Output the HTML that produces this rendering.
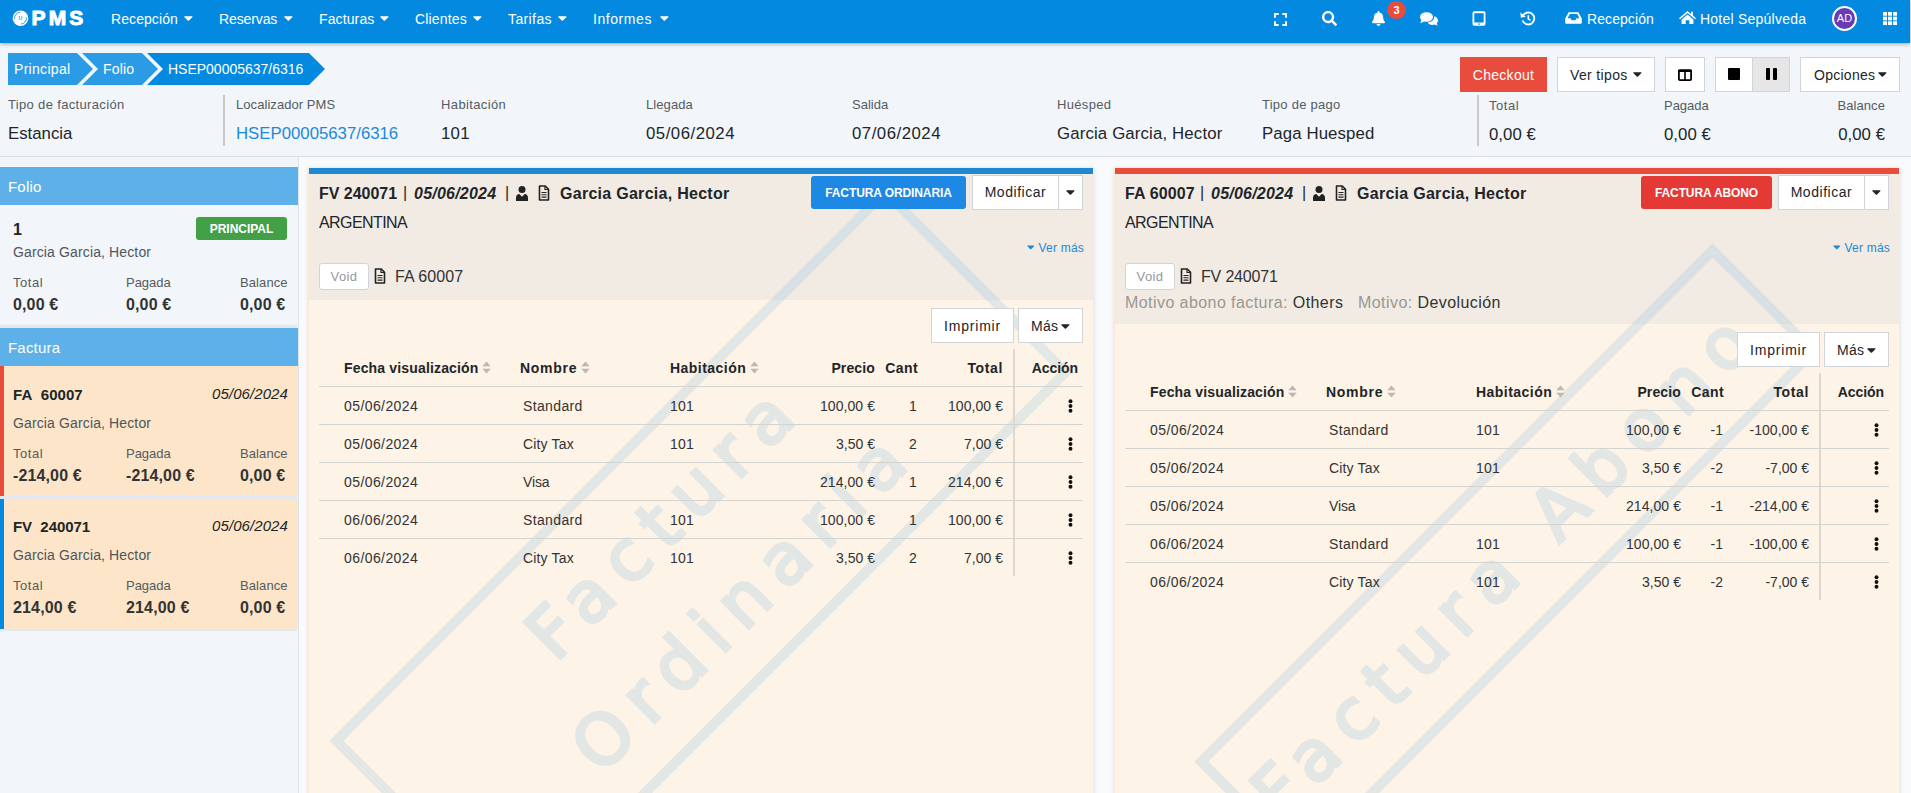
<!DOCTYPE html>
<html lang="es">
<head>
<meta charset="utf-8">
<title>PMS - Folio</title>
<style>
*{box-sizing:border-box}
html,body{margin:0;padding:0}
body{width:1911px;height:793px;overflow:hidden;position:relative;background:#f2f6fa;font-family:"Liberation Sans",sans-serif;color:#212529;font-size:14px}
.t{position:absolute;line-height:20px;white-space:nowrap}
.abs{position:absolute}
svg{display:block}
.caret{position:absolute;width:8.75px;height:14px;fill:currentColor}
#nav{position:absolute;left:0;top:0;width:1910px;height:43px;background:#0489e1;box-shadow:0 1px 4px rgba(0,0,0,.35);color:#fff;z-index:5}
#nav .t{color:#fff}
.btn{position:absolute;background:#fff;border:1px solid #d0d5da;color:#212529;text-align:center;white-space:nowrap}
.crumb{position:absolute;top:53px;height:32px;color:#fff;font-size:14px;line-height:32px;white-space:nowrap}
#side{position:absolute;left:0;top:157px;width:299px;height:636px;border-right:1px solid #dde3e9;background:#f2f6fa}
.shead{position:absolute;left:0;width:298px;height:38px;background:#5eb1e8;color:#fff;font-size:15px;line-height:39px;padding-left:8px}
.card{position:absolute;left:0;width:298px;height:130px;background:#fce5c8}
.panel{position:absolute;top:168px;width:784px;height:640px;background:#fdf3e6;overflow:hidden;box-shadow:0 0 0 1px #fbe9d8,0 1px 4px 1px rgba(0,0,0,.13)}
.phead{position:absolute;left:0;top:0;width:784px;background:#f1ebe4}
.wm{position:absolute;border:10px solid #0489e0;color:#0489e0;opacity:.1;font-family:"DejaVu Sans",sans-serif;font-weight:400;-webkit-text-stroke:3.4px #0489e0;font-size:70px;line-height:112px;letter-spacing:14px;text-align:center;padding:14.5px 10.5px 6.5px 10.5px;transform:rotate(-45deg);white-space:nowrap}
.hl{position:absolute;height:1px;background:#d3d3d0}
.badge{position:absolute;color:#fff;font-weight:700;font-size:12px;text-align:center;border-radius:3px}
</style>
</head>
<body>

<div id="nav">
<svg class="abs" style="left:12px;top:10px" width="17" height="17" viewBox="0 0 17 17"><circle cx="8.500" cy="8.200" r="7.800" fill="#fff"/><path d="M2.600 8.900A6 6 0 0 1 8 2.300" fill="none" stroke="#0489e1" stroke-width=".8"/><path d="M14.400 7.500A6 6 0 0 1 9 14.100" fill="none" stroke="#0489e1" stroke-width=".8"/><text x="8.400" y="10.100" font-size="5.200" font-weight="700" fill="#2b9be6" text-anchor="middle" font-family="Liberation Sans">U</text></svg>
<span class="t" style="top:8.5px;font-size:21px;font-weight:700;color:#fff;letter-spacing:3.1px;left:31.6px;line-height:24px;top:6.050px;-webkit-text-stroke:1px #fff;">PMS</span>
<span class="t" style="top:9.0px;font-size:14px;color:#fff;letter-spacing:0.08px;left:111px;">Recepción</span>
<svg class="caret" style="left:184.4px;top:11.2px;width:8.75px;height:14px" viewBox="0 0 320 512"><path d="M31.3 192h257.3c17.8 0 26.7 21.5 14.1 34.1L174.1 354.8c-7.8 7.8-20.5 7.8-28.3 0L17.2 226.1C4.6 213.5 13.500 192 31.300 192z"/></svg>
<span class="t" style="top:9.0px;font-size:14px;color:#fff;letter-spacing:-0.11px;left:219px;">Reservas</span>
<svg class="caret" style="left:284.4px;top:11.2px;width:8.75px;height:14px" viewBox="0 0 320 512"><path d="M31.3 192h257.3c17.8 0 26.7 21.5 14.1 34.1L174.1 354.8c-7.8 7.8-20.5 7.8-28.3 0L17.2 226.1C4.6 213.5 13.500 192 31.300 192z"/></svg>
<span class="t" style="top:9.0px;font-size:14px;color:#fff;letter-spacing:0.12px;left:319px;">Facturas</span>
<svg class="caret" style="left:380.4px;top:11.2px;width:8.75px;height:14px" viewBox="0 0 320 512"><path d="M31.3 192h257.3c17.8 0 26.7 21.5 14.1 34.1L174.1 354.8c-7.8 7.8-20.5 7.8-28.3 0L17.2 226.1C4.6 213.5 13.500 192 31.300 192z"/></svg>
<span class="t" style="top:9.0px;font-size:14px;color:#fff;letter-spacing:0.16px;left:415px;">Clientes</span>
<svg class="caret" style="left:473.4px;top:11.2px;width:8.75px;height:14px" viewBox="0 0 320 512"><path d="M31.3 192h257.3c17.8 0 26.7 21.5 14.1 34.1L174.1 354.8c-7.8 7.8-20.5 7.8-28.3 0L17.2 226.1C4.6 213.5 13.500 192 31.300 192z"/></svg>
<span class="t" style="top:9.0px;font-size:14px;color:#fff;letter-spacing:0.39px;left:508px;">Tarifas</span>
<svg class="caret" style="left:558.4px;top:11.2px;width:8.75px;height:14px" viewBox="0 0 320 512"><path d="M31.3 192h257.3c17.8 0 26.7 21.5 14.1 34.1L174.1 354.8c-7.8 7.8-20.5 7.8-28.3 0L17.2 226.1C4.6 213.5 13.500 192 31.300 192z"/></svg>
<span class="t" style="top:9.0px;font-size:14px;color:#fff;letter-spacing:0.56px;left:593px;">Informes</span>
<svg class="caret" style="left:660.4px;top:11.2px;width:8.75px;height:14px" viewBox="0 0 320 512"><path d="M31.3 192h257.3c17.8 0 26.7 21.5 14.1 34.1L174.1 354.8c-7.8 7.8-20.5 7.8-28.3 0L17.2 226.1C4.6 213.5 13.500 192 31.300 192z"/></svg>
<svg class="abs" style="left:1273.5px;top:12.5px" width="13" height="13" viewBox="0 0 14 14" fill="none" stroke="#fff" stroke-width="2.100"><path d="M1 5V1h4M9 1h4v4M13 9v4H9M5 13H1V9"/></svg>
<svg class="abs" style="left:1322px;top:11px" width="15" height="15" viewBox="0 0 512 512" fill="#fff"><path d="M505 442.7L405.3 343c-4.500-4.500-10.600-7-17-7H372c27.600-35.300 44-79.700 44-128C416 93.100 322.900 0 208 0S0 93.100 0 208s93.100 208 208 208c48.300 0 92.700-16.400 128-44v16.300c0 6.400 2.500 12.500 7 17l99.700 99.700c9.400 9.400 24.600 9.400 33.900 0l28.300-28.300c9.400-9.400 9.400-24.600.1-34zM208 336c-70.700 0-128-57.200-128-128 0-70.700 57.200-128 128-128 70.700 0 128 57.200 128 128 0 70.700-57.200 128-128 128z"/></svg>
<svg class="abs" style="left:1372px;top:11px" width="13" height="15" viewBox="0 0 448 512" fill="#fff"><path d="M224 512c35.320 0 63.970-28.650 63.970-64H160.030c0 35.350 28.650 64 63.970 64zm215.390-149.710c-19.320-20.760-55.470-51.990-55.470-154.290 0-77.700-54.480-139.900-127.940-155.160V32c0-17.670-14.320-32-31.980-32s-31.980 14.330-31.980 32v20.840C118.560 68.100 64.080 130.300 64.080 208c0 102.300-36.150 133.530-55.470 154.290-6 6.450-8.660 14.160-8.610 21.710.11 16.400 12.980 32 32.100 32h383.800c19.120 0 32-15.600 32.100-32 .05-7.550-2.610-15.270-8.610-21.710z"/></svg>
<div class="abs" style="left:1387px;top:1px;width:19px;height:18px;border-radius:9px;background:#e74c3c;color:#fff;font-size:11px;font-weight:700;text-align:center;line-height:18px">3</div>
<svg class="abs" style="left:1420px;top:12px" width="18" height="14" viewBox="0 0 18 14" fill="#fff"><ellipse cx="6.500" cy="5" rx="6.500" ry="4.800"/><path d="M1.500 7.500L0.300 11.200 5 9z"/><path d="M14 4.200c2.300.5 4 2.200 4 4.200 0 1.100-.5 2.100-1.300 2.900l.9 2.500-3.100-1.200c-.7.200-1.400.300-2.100.300-2.100 0-3.900-.9-4.800-2.300 3.700-.3 6.600-2.600 6.600-5.500 0-.3 0-.6-.2-.9z"/></svg>
<svg class="abs" style="left:1472px;top:11px" width="14" height="15" viewBox="0 0 14 15"><rect x="0.500" y="0.300" width="13" height="14.400" rx="1.800" fill="#fff"/><rect x="2.300" y="2.200" width="9.400" height="9.300" fill="#0489e1"/><circle cx="7" cy="13.100" r=".8" fill="#0489e1"/></svg>
<svg class="abs" style="left:1520px;top:11px" width="16" height="15" viewBox="0 0 16 15" fill="none" stroke="#fff"><path d="M3.200 4.300A6 6 0 1 1 2.600 9.500" stroke-width="1.900"/><path d="M0.300 1.500l.6 5.200 5-1z" fill="#fff" stroke="none"/><path d="M8.300 4.200v3.600l2.200 1.600" stroke-width="1.600"/></svg>
<svg class="abs" style="left:1565px;top:12px" width="17" height="12" viewBox="0 0 17 12" fill="#fff"><path d="M3.600.300h9.800l3.400 6.200v4.300a1 1 0 0 1-1 1H1.200a1 1 0 0 1-1-1V6.500zM4.800 2L2.600 6.300h3l1 1.900h3.800l1-1.900h3L12.200 2z" fill-rule="evenodd"/></svg>
<span class="t" style="top:9.0px;font-size:14px;color:#fff;letter-spacing:0.08px;left:1587px;">Recepción</span>
<svg class="abs" style="left:1679px;top:11px" width="17" height="13" viewBox="0 0 17 13" fill="#fff"><path d="M8.500 0L0 7.200l1 1.100L8.500 2 16 8.300l1-1.100L14 4.600V.800h-2v2.100z"/><path d="M8.500 3.400L2.600 8.400V13h4.100V9.300h3.600V13h4.100V8.400z"/></svg>
<span class="t" style="top:9.0px;font-size:14px;color:#fff;letter-spacing:0.23px;left:1700px;">Hotel Sepúlveda</span>
<div class="abs" style="left:1832px;top:6px;width:25px;height:25px;border-radius:13px;background:#673ab7;border:2px solid #fff;color:#fff;font-size:11px;text-align:center;line-height:21px">AD</div>
<svg class="abs" style="left:1883px;top:12px" width="14" height="13" viewBox="0 0 14 13" fill="#fff"><rect x="0" y="0" width="4" height="3.700"/><rect x="5" y="0" width="4" height="3.700"/><rect x="10" y="0" width="4" height="3.700"/><rect x="0" y="4.650" width="4" height="3.700"/><rect x="5" y="4.650" width="4" height="3.700"/><rect x="10" y="4.650" width="4" height="3.700"/><rect x="0" y="9.300" width="4" height="3.700"/><rect x="5" y="9.300" width="4" height="3.700"/><rect x="10" y="9.300" width="4" height="3.700"/></svg>
</div>
<svg class="abs" style="left:8px;top:53px" width="320" height="32" viewBox="0 0 320 32"><path d="M0 0H69L85 16 69 32H0z" fill="#2b9be6"/><path d="M74 0H134L150 16 134 32H74L90 16z" fill="#2b9be6"/><path d="M139 0H301L317 16 301 32H139L155 16z" fill="#0489e1"/><text x="6" y="21" font-size="14" fill="#fff" font-family="Liberation Sans" style="letter-spacing:0.3px">Principal</text><text x="95" y="21" font-size="14" fill="#fff" font-family="Liberation Sans" style="letter-spacing:0.17px">Folio</text><text x="160" y="21" font-size="14" fill="#fff" font-family="Liberation Sans" style="letter-spacing:-0.01px">HSEP00005637/6316</text></svg>
<div class="btn" style="left:1460px;top:57px;width:87px;height:35px;background:#e74c3c;border-color:#e74c3c;color:#fff;line-height:34px"><span style="letter-spacing:0.27px">Checkout</span></div>
<div class="btn" style="left:1557px;top:57px;width:98px;height:35px;line-height:34px;text-align:left;padding-left:12px"><span style="letter-spacing:0.36px">Ver tipos</span><svg class="caret" style="left:75px;top:8.5px" viewBox="0 0 320 512"><path d="M31.3 192h257.3c17.8 0 26.7 21.5 14.1 34.1L174.1 354.8c-7.8 7.8-20.5 7.8-28.3 0L17.2 226.1C4.6 213.5 13.5 192 31.3 192z"/></svg></div>
<div class="btn" style="left:1665px;top:57px;width:40px;height:35px"><svg class="abs" style="left:12px;top:11px" width="14" height="12" viewBox="0 0 14 12"><rect x=".9" y="1.400" width="12.200" height="9.700" rx="1" fill="none" stroke="#000" stroke-width="1.800"/><rect x="0" y="0.500" width="14" height="2.600" rx="1" fill="#000"/><rect x="6.200" y="2" width="1.600" height="9" fill="#000"/></svg></div>
<div class="btn" style="left:1715px;top:57px;width:38px;height:35px;border-right:none"><div class="abs" style="left:12px;top:10px;width:12px;height:12px;background:#000;border-radius:1px"></div></div>
<div class="btn" style="left:1752px;top:57px;width:38px;height:35px;background:#e6e6e6"><div class="abs" style="left:13px;top:10px;width:4px;height:12px;background:#000;border-radius:1px"></div><div class="abs" style="left:20px;top:10px;width:4px;height:12px;background:#000;border-radius:1px"></div></div>
<div class="btn" style="left:1800px;top:57px;width:100px;height:35px;line-height:34px;text-align:left;padding-left:13px"><span style="letter-spacing:0.27px">Opciones</span><svg class="caret" style="left:76.8px;top:8.5px" viewBox="0 0 320 512"><path d="M31.3 192h257.3c17.8 0 26.7 21.5 14.1 34.1L174.1 354.8c-7.8 7.8-20.5 7.8-28.3 0L17.2 226.1C4.6 213.5 13.5 192 31.3 192z"/></svg></div>
<span class="t" style="top:94.8px;font-size:13px;color:#555b61;letter-spacing:0.34px;left:8px;">Tipo de facturación</span>
<span class="t" style="top:123.8px;font-size:16.8px;letter-spacing:0.01px;left:8px;">Estancia</span>
<span class="t" style="top:94.8px;font-size:13px;color:#555b61;letter-spacing:0.06px;left:236px;">Localizador PMS</span>
<span class="t" style="top:123.8px;font-size:16.8px;color:#1e88d8;letter-spacing:-0.01px;left:236px;">HSEP00005637/6316</span>
<span class="t" style="top:94.8px;font-size:13px;color:#555b61;letter-spacing:0.38px;left:441px;">Habitación</span>
<span class="t" style="top:123.8px;font-size:16.8px;letter-spacing:0.25px;left:441px;">101</span>
<span class="t" style="top:94.8px;font-size:13px;color:#555b61;letter-spacing:0.09px;left:646px;">Llegada</span>
<span class="t" style="top:123.8px;font-size:16.8px;letter-spacing:0.5px;left:646px;">05/06/2024</span>
<span class="t" style="top:94.8px;font-size:13px;color:#555b61;left:852px;">Salida</span>
<span class="t" style="top:123.8px;font-size:16.8px;letter-spacing:0.5px;left:852px;">07/06/2024</span>
<span class="t" style="top:94.8px;font-size:13px;color:#555b61;letter-spacing:0.32px;left:1057px;">Huésped</span>
<span class="t" style="top:123.8px;font-size:16.8px;letter-spacing:0.15px;left:1057px;">Garcia Garcia, Hector</span>
<span class="t" style="top:94.8px;font-size:13px;color:#555b61;letter-spacing:0.26px;left:1262px;">Tipo de pago</span>
<span class="t" style="top:123.8px;font-size:16.8px;letter-spacing:0.11px;left:1262px;">Paga Huesped</span>
<div class="abs" style="left:223px;top:95px;width:2px;height:51px;background:#c9c9c9"></div>
<div class="abs" style="left:1477px;top:95px;width:2px;height:51px;background:#c9c9c9"></div>
<span class="t" style="top:95.6px;font-size:13px;color:#555b61;letter-spacing:0.54px;left:1489px;">Total</span>
<span class="t" style="top:124.6px;font-size:16.8px;letter-spacing:0.02px;left:1489px;">0,00 €</span>
<span class="t" style="top:95.6px;font-size:13px;color:#555b61;letter-spacing:-0.04px;left:1664px;">Pagada</span>
<span class="t" style="top:124.6px;font-size:16.8px;letter-spacing:0.02px;left:1664px;">0,00 €</span>
<span class="t" style="top:95.6px;font-size:13px;color:#555b61;letter-spacing:0.09px;right:26px;">Balance</span>
<span class="t" style="top:124.6px;font-size:16.8px;letter-spacing:0.02px;right:26px;">0,00 €</span>
<div class="abs" style="left:0;top:156px;width:1911px;height:1px;background:#d9dde1"></div>
<div class="abs" style="left:299px;top:157px;width:1612px;height:636px;background:#f8fafc"></div>
<div id="side">
<div class="shead" style="top:10px"><span style="letter-spacing:0.19px">Folio</span></div>
<span class="t" style="top:62.6px;font-size:16px;font-weight:700;letter-spacing:0.23px;left:13px;">1</span>
<div class="badge" style="left:196px;top:60px;width:91px;height:23px;line-height:24.5px;background:#43a047"><span style="letter-spacing:-0.04px">PRINCIPAL</span></div>
<span class="t" style="top:85.2px;font-size:14px;color:#4f555b;letter-spacing:0.13px;left:13px;">Garcia Garcia, Hector</span>
<span class="t" style="top:116.0px;font-size:13px;color:#555b61;letter-spacing:0.54px;left:13px;">Total</span>
<span class="t" style="top:138.2px;font-size:16px;font-weight:700;color:#333;letter-spacing:0.14px;left:13px;">0,00 €</span>
<span class="t" style="top:116.0px;font-size:13px;color:#555b61;letter-spacing:-0.04px;left:126px;">Pagada</span>
<span class="t" style="top:138.2px;font-size:16px;font-weight:700;color:#333;letter-spacing:0.14px;left:126px;">0,00 €</span>
<span class="t" style="top:116.0px;font-size:13px;color:#555b61;letter-spacing:0.09px;left:240px;">Balance</span>
<span class="t" style="top:138.2px;font-size:16px;font-weight:700;color:#333;letter-spacing:0.14px;left:240px;">0,00 €</span>
<div class="abs" style="left:0;top:168px;width:297px;height:3px;background:#e3e8ee"></div>
<div class="shead" style="top:171px"><span style="letter-spacing:0.19px">Factura</span></div>
<div class="card" style="top:209px;border-left:4px solid #e74c3c">
<span class="t" style="top:19.4px;font-size:15px;font-weight:700;letter-spacing:0.06px;left:9px;">FA&nbsp; 60007</span>
<span class="t" style="top:18.4px;font-size:15px;font-style:italic;letter-spacing:0.09px;right:10px;">05/06/2024</span>
<span class="t" style="top:47.0px;font-size:14px;color:#4f555b;letter-spacing:0.13px;left:9px;">Garcia Garcia, Hector</span>
<span class="t" style="top:77.5px;font-size:13px;color:#555b61;letter-spacing:0.54px;left:9px;">Total</span>
<span class="t" style="top:100.2px;font-size:16px;font-weight:700;color:#333;letter-spacing:0.13px;left:9px;">-214,00 €</span>
<span class="t" style="top:77.5px;font-size:13px;color:#555b61;letter-spacing:-0.04px;left:122px;">Pagada</span>
<span class="t" style="top:100.2px;font-size:16px;font-weight:700;color:#333;letter-spacing:0.13px;left:122px;">-214,00 €</span>
<span class="t" style="top:77.5px;font-size:13px;color:#555b61;letter-spacing:0.09px;left:236px;">Balance</span>
<span class="t" style="top:100.2px;font-size:16px;font-weight:700;color:#333;letter-spacing:0.14px;left:236px;">0,00 €</span>
</div>
<div class="card" style="top:342px;border-left:4px solid #0489e1">
<span class="t" style="top:18.4px;font-size:15px;font-weight:700;letter-spacing:-0.04px;left:9px;">FV&nbsp; 240071</span>
<span class="t" style="top:17.4px;font-size:15px;font-style:italic;letter-spacing:0.09px;right:10px;">05/06/2024</span>
<span class="t" style="top:46.0px;font-size:14px;color:#4f555b;letter-spacing:0.13px;left:9px;">Garcia Garcia, Hector</span>
<span class="t" style="top:76.5px;font-size:13px;color:#555b61;letter-spacing:0.54px;left:9px;">Total</span>
<span class="t" style="top:99.2px;font-size:16px;font-weight:700;color:#333;letter-spacing:0.16px;left:9px;">214,00 €</span>
<span class="t" style="top:76.5px;font-size:13px;color:#555b61;letter-spacing:-0.04px;left:122px;">Pagada</span>
<span class="t" style="top:99.2px;font-size:16px;font-weight:700;color:#333;letter-spacing:0.16px;left:122px;">214,00 €</span>
<span class="t" style="top:76.5px;font-size:13px;color:#555b61;letter-spacing:0.09px;left:236px;">Balance</span>
<span class="t" style="top:99.2px;font-size:16px;font-weight:700;color:#333;letter-spacing:0.14px;left:236px;">0,00 €</span>
</div>
<div class="abs" style="left:0;top:339px;width:297px;height:3px;background:#e3e8ee"></div>
<div class="abs" style="left:0;top:472px;width:297px;height:2px;background:#e3e8ee"></div>
</div>
<div class="panel" style="left:309px">
<div class="phead" style="height:132px"></div>
<div class="wm" style="left:-1.0px;top:255.70000000000005px;width:786px;height:265px;">Factura<br>Ordinaria</div>
<div class="abs" style="left:0;top:0;width:784px;height:6px;background:#1e88d0"></div>
<span class="t" style="top:16.0px;font-size:16px;font-weight:700;letter-spacing:-0.02px;left:10px;">FV 240071</span>
<span class="t" style="top:15.0px;font-size:16px;left:94px;">|</span>
<span class="t" style="top:16.0px;font-size:16px;font-weight:700;font-style:italic;letter-spacing:0.23px;left:105px;">05/06/2024</span>
<span class="t" style="top:15.0px;font-size:16px;left:196px;">|</span>
<svg class="abs" style="left:206px;top:18px" width="14" height="15" viewBox="0 0 14 15" fill="#222"><circle cx="7" cy="3.600" r="3.500"/><path d="M1 15v-3.500c0-2 1.500-3.300 3.300-3.500L7 10.800 9.700 8c1.800.2 3.300 1.500 3.300 3.500V15z"/></svg>
<svg class="abs" style="left:229px;top:17px" width="12" height="16" viewBox="0 0 12 16"><path d="M1.500 1h5.800L10.500 4.200V15h-9z" fill="none" stroke="#222" stroke-width="1.600" stroke-linejoin="round"/><path d="M7 1v3.500h3.500" fill="none" stroke="#222" stroke-width="1.200"/><path d="M3.500 7.500h5M3.500 9.800h5M3.500 12.100h5" stroke="#222" stroke-width="1.100"/></svg>
<span class="t" style="top:16.0px;font-size:16px;font-weight:700;letter-spacing:0.28px;left:251px;">Garcia Garcia, Hector</span>
<span class="t" style="top:45.0px;font-size:16px;letter-spacing:-0.58px;left:10px;">ARGENTINA</span>
<div class="badge" style="left:502px;top:8px;width:155px;height:33px;line-height:34.5px;background:#1e88e5"><span style="letter-spacing:-0.1px">FACTURA ORDINARIA</span></div>
<div class="btn" style="left:663px;top:7.400000000000006px;width:87px;height:34.6px;line-height:33.6px;font-size:14px"><span style="letter-spacing:0.54px">Modificar</span></div>
<div class="btn" style="left:749px;top:7.400000000000006px;width:25px;height:34.6px"><svg class="caret" style="left:7px;top:8.7px" viewBox="0 0 320 512"><path d="M31.3 192h257.3c17.8 0 26.7 21.5 14.1 34.1L174.1 354.8c-7.8 7.8-20.5 7.8-28.3 0L17.2 226.1C4.6 213.5 13.5 192 31.3 192z"/></svg></div>
<svg class="caret" style="left:718px;top:72.69999999999999px;width:7.5px;height:12px;color:#1e88d8" viewBox="0 0 320 512"><path d="M31.3 192h257.3c17.8 0 26.7 21.5 14.1 34.1L174.1 354.8c-7.800 7.800-20.500 7.800-28.300 0L17.200 226.100C4.600 213.500 13.500 192 31.300 192z"/></svg>
<span class="t" style="top:70.0px;font-size:12px;color:#1e88d8;letter-spacing:0.2px;right:9px;">Ver más</span>
<div class="btn" style="left:10px;top:95px;width:50px;height:27px;line-height:25px;font-size:13px;color:#999;border-radius:3px"><span style="letter-spacing:0.39px">Void</span></div>
<svg class="abs" style="left:65px;top:100px" width="12" height="16" viewBox="0 0 12 16"><path d="M1.500 1h5.800L10.500 4.200V15h-9z" fill="none" stroke="#222" stroke-width="1.600" stroke-linejoin="round"/><path d="M7 1v3.500h3.500" fill="none" stroke="#222" stroke-width="1.200"/><path d="M3.500 7.500h5M3.500 9.800h5M3.500 12.100h5" stroke="#222" stroke-width="1.100"/></svg>
<span class="t" style="top:98.6px;font-size:16px;color:#333;letter-spacing:0.07px;left:86px;">FA 60007</span>
<div class="btn" style="left:622px;top:140px;width:83px;height:35px;line-height:35px"><span style="letter-spacing:0.81px">Imprimir</span></div>
<div class="btn" style="left:709px;top:140px;width:65px;height:35px;line-height:35px;text-align:left;padding-left:12px"><span style="letter-spacing:0.22px">Más</span><svg class="caret" style="left:42px;top:9.5px" viewBox="0 0 320 512"><path d="M31.3 192h257.3c17.8 0 26.7 21.5 14.1 34.1L174.1 354.8c-7.8 7.8-20.5 7.8-28.3 0L17.2 226.1C4.6 213.5 13.5 192 31.3 192z"/></svg></div>
<span class="t" style="top:190.0px;font-size:14px;font-weight:700;letter-spacing:0.16px;left:35px;">Fecha visualización</span>
<svg class="abs" style="left:172.8px;top:193.4px" width="9" height="13" viewBox="0 0 9 13" fill="#bdb8b0"><path d="M4.500 0.600L8.700 5.300H0.300z"/><path d="M4.500 12.400L8.700 7.700H0.300z"/></svg>
<span class="t" style="top:190.0px;font-size:14px;font-weight:700;letter-spacing:0.73px;left:211px;">Nombre</span>
<svg class="abs" style="left:271.79999999999995px;top:193.4px" width="9" height="13" viewBox="0 0 9 13" fill="#bdb8b0"><path d="M4.500 0.600L8.700 5.300H0.300z"/><path d="M4.500 12.400L8.700 7.700H0.300z"/></svg>
<span class="t" style="top:190.0px;font-size:14px;font-weight:700;letter-spacing:0.46px;left:361px;">Habitación</span>
<svg class="abs" style="left:440.79999999999995px;top:193.4px" width="9" height="13" viewBox="0 0 9 13" fill="#bdb8b0"><path d="M4.500 0.600L8.700 5.300H0.300z"/><path d="M4.500 12.400L8.700 7.700H0.300z"/></svg>
<span class="t" style="top:190.0px;font-size:14px;font-weight:700;letter-spacing:0.13px;right:218px;">Precio</span>
<span class="t" style="top:190.0px;font-size:14px;font-weight:700;letter-spacing:0.39px;right:175px;">Cant</span>
<span class="t" style="top:190.0px;font-size:14px;font-weight:700;letter-spacing:0.64px;right:90px;">Total</span>
<span class="t" style="top:190.0px;font-size:14px;font-weight:700;letter-spacing:-0.08px;right:15px;">Acción</span>
<div class="abs" style="left:704px;top:181px;width:2px;height:227px;background:#dcd8d0"></div>
<div class="hl" style="left:10px;top:218px;width:764px"></div>
<span class="t" style="top:228.0px;font-size:14px;color:#333;letter-spacing:0.41px;left:35px;">05/06/2024</span>
<span class="t" style="top:228.0px;font-size:14px;color:#333;letter-spacing:0.36px;left:214px;">Standard</span>
<span class="t" style="top:228.0px;font-size:14px;color:#333;letter-spacing:0.2px;left:361px;">101</span>
<span class="t" style="top:228.0px;font-size:14px;color:#333;letter-spacing:0.06px;right:218px;">100,00 €</span>
<span class="t" style="top:228.0px;font-size:14px;color:#333;letter-spacing:0.2px;right:176px;">1</span>
<span class="t" style="top:228.0px;font-size:14px;color:#333;letter-spacing:0.06px;right:90px;">100,00 €</span>
<svg class="abs" style="left:758.8px;top:231.4px" width="5" height="14" viewBox="0 0 5 14" fill="#111"><circle cx="2.500" cy="2.200" r="1.950"/><circle cx="2.500" cy="7" r="1.950"/><circle cx="2.500" cy="11.800" r="1.950"/></svg>
<div class="hl" style="left:10px;top:256px;width:764px"></div>
<span class="t" style="top:266.0px;font-size:14px;color:#333;letter-spacing:0.41px;left:35px;">05/06/2024</span>
<span class="t" style="top:266.0px;font-size:14px;color:#333;letter-spacing:0.17px;left:214px;">City Tax</span>
<span class="t" style="top:266.0px;font-size:14px;color:#333;letter-spacing:0.2px;left:361px;">101</span>
<span class="t" style="top:266.0px;font-size:14px;color:#333;letter-spacing:0.02px;right:218px;">3,50 €</span>
<span class="t" style="top:266.0px;font-size:14px;color:#333;letter-spacing:0.2px;right:176px;">2</span>
<span class="t" style="top:266.0px;font-size:14px;color:#333;letter-spacing:0.02px;right:90px;">7,00 €</span>
<svg class="abs" style="left:758.8px;top:269.4px" width="5" height="14" viewBox="0 0 5 14" fill="#111"><circle cx="2.500" cy="2.200" r="1.950"/><circle cx="2.500" cy="7" r="1.950"/><circle cx="2.500" cy="11.800" r="1.950"/></svg>
<div class="hl" style="left:10px;top:294px;width:764px"></div>
<span class="t" style="top:304.0px;font-size:14px;color:#333;letter-spacing:0.41px;left:35px;">05/06/2024</span>
<span class="t" style="top:304.0px;font-size:14px;color:#333;letter-spacing:-0.16px;left:214px;">Visa</span>
<span class="t" style="top:304.0px;font-size:14px;color:#333;letter-spacing:0.06px;right:218px;">214,00 €</span>
<span class="t" style="top:304.0px;font-size:14px;color:#333;letter-spacing:0.2px;right:176px;">1</span>
<span class="t" style="top:304.0px;font-size:14px;color:#333;letter-spacing:0.06px;right:90px;">214,00 €</span>
<svg class="abs" style="left:758.8px;top:307.4px" width="5" height="14" viewBox="0 0 5 14" fill="#111"><circle cx="2.500" cy="2.200" r="1.950"/><circle cx="2.500" cy="7" r="1.950"/><circle cx="2.500" cy="11.800" r="1.950"/></svg>
<div class="hl" style="left:10px;top:332px;width:764px"></div>
<span class="t" style="top:342.0px;font-size:14px;color:#333;letter-spacing:0.41px;left:35px;">06/06/2024</span>
<span class="t" style="top:342.0px;font-size:14px;color:#333;letter-spacing:0.36px;left:214px;">Standard</span>
<span class="t" style="top:342.0px;font-size:14px;color:#333;letter-spacing:0.2px;left:361px;">101</span>
<span class="t" style="top:342.0px;font-size:14px;color:#333;letter-spacing:0.06px;right:218px;">100,00 €</span>
<span class="t" style="top:342.0px;font-size:14px;color:#333;letter-spacing:0.2px;right:176px;">1</span>
<span class="t" style="top:342.0px;font-size:14px;color:#333;letter-spacing:0.06px;right:90px;">100,00 €</span>
<svg class="abs" style="left:758.8px;top:345.4px" width="5" height="14" viewBox="0 0 5 14" fill="#111"><circle cx="2.500" cy="2.200" r="1.950"/><circle cx="2.500" cy="7" r="1.950"/><circle cx="2.500" cy="11.800" r="1.950"/></svg>
<div class="hl" style="left:10px;top:370px;width:764px"></div>
<span class="t" style="top:380.0px;font-size:14px;color:#333;letter-spacing:0.41px;left:35px;">06/06/2024</span>
<span class="t" style="top:380.0px;font-size:14px;color:#333;letter-spacing:0.17px;left:214px;">City Tax</span>
<span class="t" style="top:380.0px;font-size:14px;color:#333;letter-spacing:0.2px;left:361px;">101</span>
<span class="t" style="top:380.0px;font-size:14px;color:#333;letter-spacing:0.02px;right:218px;">3,50 €</span>
<span class="t" style="top:380.0px;font-size:14px;color:#333;letter-spacing:0.2px;right:176px;">2</span>
<span class="t" style="top:380.0px;font-size:14px;color:#333;letter-spacing:0.02px;right:90px;">7,00 €</span>
<svg class="abs" style="left:758.8px;top:383.4px" width="5" height="14" viewBox="0 0 5 14" fill="#111"><circle cx="2.500" cy="2.200" r="1.950"/><circle cx="2.500" cy="7" r="1.950"/><circle cx="2.500" cy="11.800" r="1.950"/></svg>
</div>
<div class="panel" style="left:1115px">
<div class="phead" style="height:156px"></div>
<div class="wm" style="left:25.5px;top:311.70000000000005px;width:733px;height:153px;padding:13.5px 15.5px 7.5px 5.5px">Factura Abono</div>
<div class="abs" style="left:0;top:0;width:784px;height:6px;background:#e74c3c"></div>
<span class="t" style="top:16.0px;font-size:16px;font-weight:700;letter-spacing:0.11px;left:10px;">FA 60007</span>
<span class="t" style="top:15.0px;font-size:16px;left:85px;">|</span>
<span class="t" style="top:16.0px;font-size:16px;font-weight:700;font-style:italic;letter-spacing:0.23px;left:96px;">05/06/2024</span>
<span class="t" style="top:15.0px;font-size:16px;left:187px;">|</span>
<svg class="abs" style="left:197px;top:18px" width="14" height="15" viewBox="0 0 14 15" fill="#222"><circle cx="7" cy="3.600" r="3.500"/><path d="M1 15v-3.500c0-2 1.500-3.300 3.300-3.500L7 10.800 9.700 8c1.800.2 3.300 1.500 3.300 3.500V15z"/></svg>
<svg class="abs" style="left:220px;top:17px" width="12" height="16" viewBox="0 0 12 16"><path d="M1.500 1h5.800L10.500 4.200V15h-9z" fill="none" stroke="#222" stroke-width="1.600" stroke-linejoin="round"/><path d="M7 1v3.500h3.500" fill="none" stroke="#222" stroke-width="1.200"/><path d="M3.500 7.500h5M3.500 9.800h5M3.500 12.100h5" stroke="#222" stroke-width="1.100"/></svg>
<span class="t" style="top:16.0px;font-size:16px;font-weight:700;letter-spacing:0.28px;left:242px;">Garcia Garcia, Hector</span>
<span class="t" style="top:45.0px;font-size:16px;letter-spacing:-0.58px;left:10px;">ARGENTINA</span>
<div class="badge" style="left:526px;top:8px;width:131px;height:33px;line-height:34.5px;background:#e53935"><span style="letter-spacing:-0.11px">FACTURA ABONO</span></div>
<div class="btn" style="left:663px;top:7.400000000000006px;width:87px;height:34.6px;line-height:33.6px;font-size:14px"><span style="letter-spacing:0.54px">Modificar</span></div>
<div class="btn" style="left:749px;top:7.400000000000006px;width:25px;height:34.6px"><svg class="caret" style="left:7px;top:8.7px" viewBox="0 0 320 512"><path d="M31.3 192h257.3c17.8 0 26.7 21.5 14.1 34.1L174.1 354.8c-7.8 7.8-20.5 7.8-28.3 0L17.2 226.1C4.6 213.5 13.5 192 31.3 192z"/></svg></div>
<svg class="caret" style="left:718px;top:72.69999999999999px;width:7.5px;height:12px;color:#1e88d8" viewBox="0 0 320 512"><path d="M31.3 192h257.3c17.8 0 26.7 21.5 14.1 34.1L174.1 354.8c-7.800 7.800-20.500 7.800-28.300 0L17.200 226.100C4.600 213.500 13.500 192 31.300 192z"/></svg>
<span class="t" style="top:70.0px;font-size:12px;color:#1e88d8;letter-spacing:0.2px;right:9px;">Ver más</span>
<div class="btn" style="left:10px;top:95px;width:50px;height:27px;line-height:25px;font-size:13px;color:#999;border-radius:3px"><span style="letter-spacing:0.39px">Void</span></div>
<svg class="abs" style="left:65px;top:100px" width="12" height="16" viewBox="0 0 12 16"><path d="M1.500 1h5.800L10.500 4.200V15h-9z" fill="none" stroke="#222" stroke-width="1.600" stroke-linejoin="round"/><path d="M7 1v3.500h3.500" fill="none" stroke="#222" stroke-width="1.200"/><path d="M3.500 7.500h5M3.500 9.800h5M3.500 12.100h5" stroke="#222" stroke-width="1.100"/></svg>
<span class="t" style="top:98.6px;font-size:16px;color:#333;letter-spacing:-0.17px;left:86px;">FV 240071</span>
<span class="t" style="top:124.8px;font-size:16px;color:#333;letter-spacing:0.43px;left:10px;"><span style="color:#9b9791">Motivo abono factura:</span> Others &nbsp;&nbsp;<span style="color:#9b9791">Motivo:</span> Devolución</span>
<div class="btn" style="left:622px;top:164px;width:83px;height:35px;line-height:35px"><span style="letter-spacing:0.81px">Imprimir</span></div>
<div class="btn" style="left:709px;top:164px;width:65px;height:35px;line-height:35px;text-align:left;padding-left:12px"><span style="letter-spacing:0.22px">Más</span><svg class="caret" style="left:42px;top:9.5px" viewBox="0 0 320 512"><path d="M31.3 192h257.3c17.8 0 26.7 21.5 14.1 34.1L174.1 354.8c-7.8 7.8-20.5 7.8-28.3 0L17.2 226.1C4.6 213.5 13.5 192 31.3 192z"/></svg></div>
<span class="t" style="top:214.0px;font-size:14px;font-weight:700;letter-spacing:0.16px;left:35px;">Fecha visualización</span>
<svg class="abs" style="left:172.8px;top:217.4px" width="9" height="13" viewBox="0 0 9 13" fill="#bdb8b0"><path d="M4.500 0.600L8.700 5.300H0.300z"/><path d="M4.500 12.400L8.700 7.700H0.300z"/></svg>
<span class="t" style="top:214.0px;font-size:14px;font-weight:700;letter-spacing:0.73px;left:211px;">Nombre</span>
<svg class="abs" style="left:271.79999999999995px;top:217.4px" width="9" height="13" viewBox="0 0 9 13" fill="#bdb8b0"><path d="M4.500 0.600L8.700 5.300H0.300z"/><path d="M4.500 12.400L8.700 7.700H0.300z"/></svg>
<span class="t" style="top:214.0px;font-size:14px;font-weight:700;letter-spacing:0.46px;left:361px;">Habitación</span>
<svg class="abs" style="left:440.79999999999995px;top:217.4px" width="9" height="13" viewBox="0 0 9 13" fill="#bdb8b0"><path d="M4.500 0.600L8.700 5.300H0.300z"/><path d="M4.500 12.400L8.700 7.700H0.300z"/></svg>
<span class="t" style="top:214.0px;font-size:14px;font-weight:700;letter-spacing:0.13px;right:218px;">Precio</span>
<span class="t" style="top:214.0px;font-size:14px;font-weight:700;letter-spacing:0.39px;right:175px;">Cant</span>
<span class="t" style="top:214.0px;font-size:14px;font-weight:700;letter-spacing:0.64px;right:90px;">Total</span>
<span class="t" style="top:214.0px;font-size:14px;font-weight:700;letter-spacing:-0.08px;right:15px;">Acción</span>
<div class="abs" style="left:704px;top:205px;width:2px;height:227px;background:#dcd8d0"></div>
<div class="hl" style="left:10px;top:242px;width:764px"></div>
<span class="t" style="top:252.0px;font-size:14px;color:#333;letter-spacing:0.41px;left:35px;">05/06/2024</span>
<span class="t" style="top:252.0px;font-size:14px;color:#333;letter-spacing:0.36px;left:214px;">Standard</span>
<span class="t" style="top:252.0px;font-size:14px;color:#333;letter-spacing:0.2px;left:361px;">101</span>
<span class="t" style="top:252.0px;font-size:14px;color:#333;letter-spacing:0.06px;right:218px;">100,00 €</span>
<span class="t" style="top:252.0px;font-size:14px;color:#333;letter-spacing:0.02px;right:176px;">-1</span>
<span class="t" style="top:252.0px;font-size:14px;color:#333;letter-spacing:0.04px;right:90px;">-100,00 €</span>
<svg class="abs" style="left:758.8px;top:255.4px" width="5" height="14" viewBox="0 0 5 14" fill="#111"><circle cx="2.500" cy="2.200" r="1.950"/><circle cx="2.500" cy="7" r="1.950"/><circle cx="2.500" cy="11.800" r="1.950"/></svg>
<div class="hl" style="left:10px;top:280px;width:764px"></div>
<span class="t" style="top:290.0px;font-size:14px;color:#333;letter-spacing:0.41px;left:35px;">05/06/2024</span>
<span class="t" style="top:290.0px;font-size:14px;color:#333;letter-spacing:0.17px;left:214px;">City Tax</span>
<span class="t" style="top:290.0px;font-size:14px;color:#333;letter-spacing:0.2px;left:361px;">101</span>
<span class="t" style="top:290.0px;font-size:14px;color:#333;letter-spacing:0.02px;right:218px;">3,50 €</span>
<span class="t" style="top:290.0px;font-size:14px;color:#333;letter-spacing:0.02px;right:176px;">-2</span>
<span class="t" style="top:290.0px;font-size:14px;color:#333;letter-spacing:-0.01px;right:90px;">-7,00 €</span>
<svg class="abs" style="left:758.8px;top:293.4px" width="5" height="14" viewBox="0 0 5 14" fill="#111"><circle cx="2.500" cy="2.200" r="1.950"/><circle cx="2.500" cy="7" r="1.950"/><circle cx="2.500" cy="11.800" r="1.950"/></svg>
<div class="hl" style="left:10px;top:318px;width:764px"></div>
<span class="t" style="top:328.0px;font-size:14px;color:#333;letter-spacing:0.41px;left:35px;">05/06/2024</span>
<span class="t" style="top:328.0px;font-size:14px;color:#333;letter-spacing:-0.16px;left:214px;">Visa</span>
<span class="t" style="top:328.0px;font-size:14px;color:#333;letter-spacing:0.06px;right:218px;">214,00 €</span>
<span class="t" style="top:328.0px;font-size:14px;color:#333;letter-spacing:0.02px;right:176px;">-1</span>
<span class="t" style="top:328.0px;font-size:14px;color:#333;letter-spacing:0.04px;right:90px;">-214,00 €</span>
<svg class="abs" style="left:758.8px;top:331.4px" width="5" height="14" viewBox="0 0 5 14" fill="#111"><circle cx="2.500" cy="2.200" r="1.950"/><circle cx="2.500" cy="7" r="1.950"/><circle cx="2.500" cy="11.800" r="1.950"/></svg>
<div class="hl" style="left:10px;top:356px;width:764px"></div>
<span class="t" style="top:366.0px;font-size:14px;color:#333;letter-spacing:0.41px;left:35px;">06/06/2024</span>
<span class="t" style="top:366.0px;font-size:14px;color:#333;letter-spacing:0.36px;left:214px;">Standard</span>
<span class="t" style="top:366.0px;font-size:14px;color:#333;letter-spacing:0.2px;left:361px;">101</span>
<span class="t" style="top:366.0px;font-size:14px;color:#333;letter-spacing:0.06px;right:218px;">100,00 €</span>
<span class="t" style="top:366.0px;font-size:14px;color:#333;letter-spacing:0.02px;right:176px;">-1</span>
<span class="t" style="top:366.0px;font-size:14px;color:#333;letter-spacing:0.04px;right:90px;">-100,00 €</span>
<svg class="abs" style="left:758.8px;top:369.4px" width="5" height="14" viewBox="0 0 5 14" fill="#111"><circle cx="2.500" cy="2.200" r="1.950"/><circle cx="2.500" cy="7" r="1.950"/><circle cx="2.500" cy="11.800" r="1.950"/></svg>
<div class="hl" style="left:10px;top:394px;width:764px"></div>
<span class="t" style="top:404.0px;font-size:14px;color:#333;letter-spacing:0.41px;left:35px;">06/06/2024</span>
<span class="t" style="top:404.0px;font-size:14px;color:#333;letter-spacing:0.17px;left:214px;">City Tax</span>
<span class="t" style="top:404.0px;font-size:14px;color:#333;letter-spacing:0.2px;left:361px;">101</span>
<span class="t" style="top:404.0px;font-size:14px;color:#333;letter-spacing:0.02px;right:218px;">3,50 €</span>
<span class="t" style="top:404.0px;font-size:14px;color:#333;letter-spacing:0.02px;right:176px;">-2</span>
<span class="t" style="top:404.0px;font-size:14px;color:#333;letter-spacing:-0.01px;right:90px;">-7,00 €</span>
<svg class="abs" style="left:758.8px;top:407.4px" width="5" height="14" viewBox="0 0 5 14" fill="#111"><circle cx="2.500" cy="2.200" r="1.950"/><circle cx="2.500" cy="7" r="1.950"/><circle cx="2.500" cy="11.800" r="1.950"/></svg>
</div>
</body></html>
